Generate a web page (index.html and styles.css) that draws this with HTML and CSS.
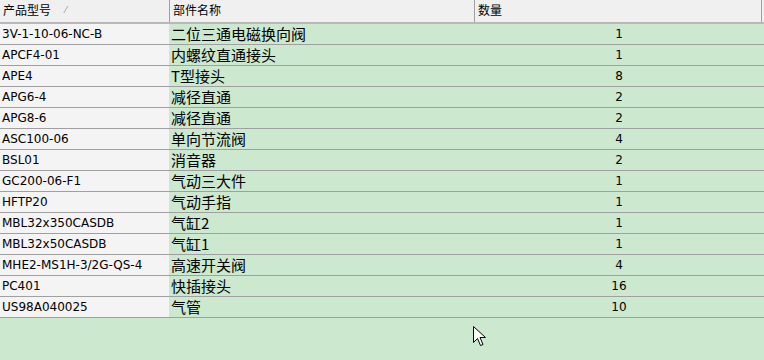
FILE: index.html
```html
<!DOCTYPE html>
<html lang="zh">
<head>
<meta charset="utf-8">
<link rel="stylesheet" href="styles.css">
</head>
<body>
<div class="grid">
  <div class="head">
    <div class="hc c1">产品型号<span class="sort">⁄</span></div>
    <div class="hc c2">部件名称</div>
    <div class="hc c3">数量</div>
  </div>
  <div class="row"><div class="c1 code">3V-1-10-06-NC-B</div><div class="c2 name">二位三通电磁换向阀</div><div class="c3 qty">1</div></div>
  <div class="row"><div class="c1 code">APCF4-01</div><div class="c2 name">内螺纹直通接头</div><div class="c3 qty">1</div></div>
  <div class="row"><div class="c1 code">APE4</div><div class="c2 name">T型接头</div><div class="c3 qty">8</div></div>
  <div class="row"><div class="c1 code">APG6-4</div><div class="c2 name">减径直通</div><div class="c3 qty">2</div></div>
  <div class="row"><div class="c1 code">APG8-6</div><div class="c2 name">减径直通</div><div class="c3 qty">2</div></div>
  <div class="row"><div class="c1 code">ASC100-06</div><div class="c2 name">单向节流阀</div><div class="c3 qty">4</div></div>
  <div class="row"><div class="c1 code">BSL01</div><div class="c2 name">消音器</div><div class="c3 qty">2</div></div>
  <div class="row"><div class="c1 code">GC200-06-F1</div><div class="c2 name">气动三大件</div><div class="c3 qty">1</div></div>
  <div class="row"><div class="c1 code">HFTP20</div><div class="c2 name">气动手指</div><div class="c3 qty">1</div></div>
  <div class="row"><div class="c1 code">MBL32x350CASDB</div><div class="c2 name">气缸2</div><div class="c3 qty">1</div></div>
  <div class="row"><div class="c1 code">MBL32x50CASDB</div><div class="c2 name">气缸1</div><div class="c3 qty">1</div></div>
  <div class="row"><div class="c1 code">MHE2-MS1H-3/2G-QS-4</div><div class="c2 name">高速开关阀</div><div class="c3 qty">4</div></div>
  <div class="row"><div class="c1 code">PC401</div><div class="c2 name">快插接头</div><div class="c3 qty">16</div></div>
  <div class="row"><div class="c1 code">US98A040025</div><div class="c2 name">气管</div><div class="c3 qty">10</div></div>
  <svg class="cursor" width="14" height="21" viewBox="0 0 14 21"><path d="M0.5 0.5 L0.5 16.5 L4.5 12.5 L7.5 19.5 L10 18.5 L7 11.5 L12.5 11.5 Z" fill="#fff" stroke="#000" stroke-width="1"/></svg>
</div>
</body>
</html>
```
FILE: styles.css
```css
html, body {
  margin: 0;
  padding: 0;
}
body {
  width: 764px;
  height: 360px;
  overflow: hidden;
  background: #cce8cf;
}
.grid {
  position: relative;
  width: 764px;
  height: 360px;
  background: #cce8cf;
}
.head {
  display: grid;
  grid-template-columns: 169px 305px 288px 2px;
  height: 22px;
  background: #f0f0f0;
  border-bottom: 2px solid #b8b8b8;
  font-family: "Noto Sans CJK SC", sans-serif;
  font-size: 12px;
  color: #000;
}
.hc {
  display: flex;
  align-items: center;
  padding-left: 3px;
  border-left: 1px solid #a0a0a0;
  line-height: 20px;
  padding-bottom: 2px;
}
.hc.c1 {
  border-left: none;
}
.hc.c3 {
  border-right: 1px solid #a0a0a0;
}
.sort {
  font-family: "DejaVu Sans", sans-serif;
  font-size: 9px;
  color: #909090;
  margin-left: 14px;
}
.row {
  display: grid;
  grid-template-columns: 169px 305px 290px;
  height: 20px;
  border-bottom: 1px solid #a0a0a0;
}
.row > div {
  display: flex;
  align-items: center;
  white-space: nowrap;
  line-height: 20px;
}
.code {
  background: #f4f4f4;
  padding-left: 2px;
  font-family: "DejaVu Sans", sans-serif;
  font-size: 12px;
  color: #000;
}
.name {
  background: #cce8cf;
  padding-left: 2px;
  font-family: "Noto Sans CJK SC", sans-serif;
  font-size: 15px;
  color: #000;
}
.name::before {
  content: "";
}
.qty {
  background: #cce8cf;
  justify-content: center;
  font-family: "DejaVu Sans", sans-serif;
  font-size: 12px;
  color: #000;
}
.cursor {
  position: absolute;
  left: 473px;
  top: 326px;
}
```
